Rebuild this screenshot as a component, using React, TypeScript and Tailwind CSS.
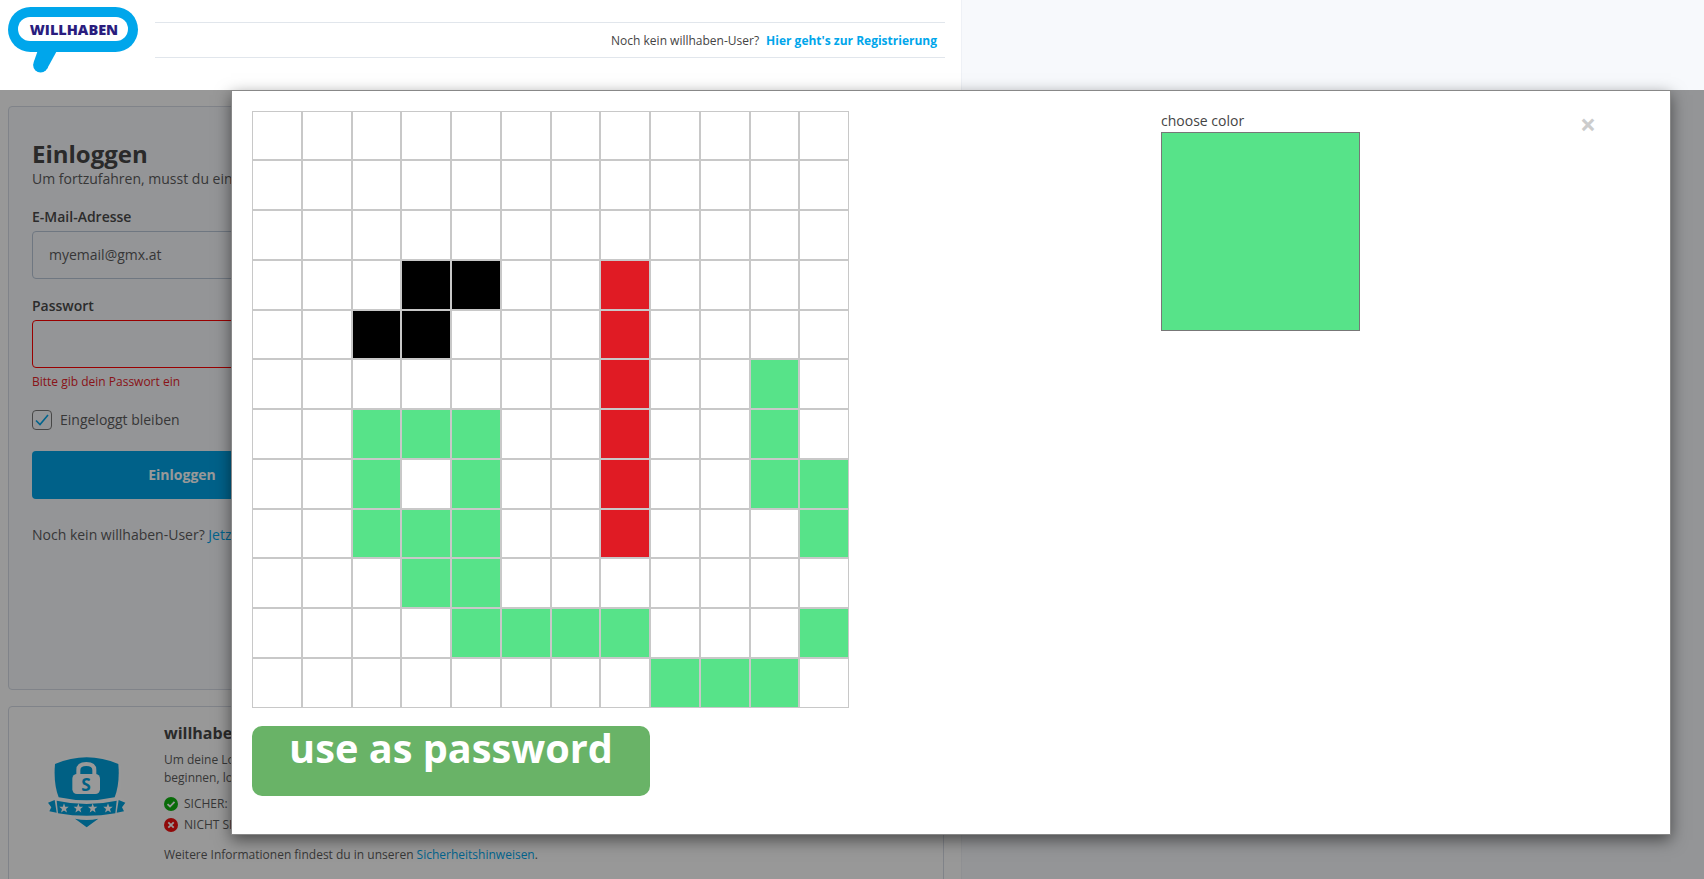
import React from "react";

const G = "bg-[#57e389]";
const R = "bg-[#e01b24]";
const K = "bg-black";

// pixel picture, row -> col -> colour
const painted: Record<string, string> = {
  "3-3": K, "3-4": K, "3-7": R,
  "4-2": K, "4-3": K, "4-7": R,
  "5-7": R, "5-10": G,
  "6-2": G, "6-3": G, "6-4": G, "6-7": R, "6-10": G,
  "7-2": G, "7-4": G, "7-7": R, "7-10": G, "7-11": G,
  "8-2": G, "8-3": G, "8-4": G, "8-7": R, "8-11": G,
  "9-3": G, "9-4": G,
  "10-4": G, "10-5": G, "10-6": G, "10-7": G, "10-11": G,
  "11-8": G, "11-9": G, "11-10": G,
};

const Logo = () => (
  <svg width="132" height="68" viewBox="0 0 132 68" className="shrink-0">
    <path d="M31 40 L25.800 55 L38.800 62.300 L51 40 Z" fill="#00a6eb" />
    <circle cx="32.600" cy="58" r="7.500" fill="#00a6eb" />
    <rect x="0" y="0" width="130" height="45" rx="22.500" fill="#00a6eb" />
    <rect x="10" y="10" width="110" height="24" rx="12" fill="#ffffff" />
    <text x="66" y="28" textAnchor="middle" fontFamily="Open Sans" fontWeight="800" fontSize="14.500" fill="#2a1d7e">
      WILLHABEN
    </text>
  </svg>
);

const starPoints = (cx: number, cy: number, r: number) =>
  Array.from({ length: 10 })
    .map((_, i) => {
      const a = -Math.PI / 2 + (i * Math.PI) / 5;
      const d = i % 2 === 0 ? r : r * 0.42;
      return `${cx + d * Math.cos(a)},${cy + d * Math.sin(a)}`;
    })
    .join(" ");

const Shield = () => (
  <svg width="100" height="85" viewBox="0 0 300 255" className="shrink-0">
    <path
      d="M45 42 Q140 2 235 42 Q240 100 232 145 L256 158 L246 172 L252 184 L226 192 L175 206 L140 232 L105 206 L54 192 L28 184 L34 172 L24 158 L48 145 Q40 100 45 42 Z"
      fill="#ffffff"
      stroke="#ffffff"
      strokeWidth="12"
      strokeLinejoin="round"
    />
    <path d="M45 42 Q140 2 235 42 Q240 100 224 142 Q140 160 56 142 Q40 100 45 42 Z" fill="#00a0dc" />
    <path d="M50 152 Q140 172 230 152 L226 190 Q140 205 54 190 Z" fill="#00a0dc" />
    <path d="M44 150 L24 158 L34 172 L28 184 L50 188 Z" fill="#00a0dc" />
    <path d="M236 150 L256 158 L246 172 L252 184 L230 188 Z" fill="#00a0dc" />
    <path d="M105 206 Q140 214 175 206 L140 232 Z" fill="#00a0dc" />
    <path d="M115 78 V60 Q115 42 139 42 Q163 42 163 60 V78" fill="none" stroke="#ffffff" strokeWidth="12" />
    <rect x="97" y="72" width="83" height="60" rx="14" fill="#ffffff" />
    <text x="138" y="122" textAnchor="middle" fontFamily="Open Sans" fontWeight="700" fontSize="52" fill="#00a0dc">S</text>
    {[72, 115, 158, 204].map((x) => (
      <polygon key={x} points={starPoints(x, 175, 15)} fill="#ffffff" />
    ))}
  </svg>
);

const StatusDot = ({ ok }: { ok: boolean }) => (
  <svg width="14" height="14" viewBox="0 0 14 14" className="shrink-0">
    <circle cx="7" cy="7" r="7" fill={ok ? "#0fb30f" : "#f01010"} />
    {ok ? (
      <path d="M3.500 7.200 L6 9.500 L10.500 4.800" fill="none" stroke="#ffffff" strokeWidth="1.800" />
    ) : (
      <path d="M4.300 4.300 L9.700 9.700 M9.700 4.300 L4.300 9.700" fill="none" stroke="#ffffff" strokeWidth="1.800" />
    )}
  </svg>
);

const PixelGrid = () => (
  <div className="grid grid-cols-12 grid-rows-[49px_50px_50px_50px_49px_50px_50px_50px_49px_50px_50px_50px] w-[597px]">
    {Array.from({ length: 144 }).map((_, i) => {
      const key = `${Math.floor(i / 12)}-${i % 12}`;
      return <div key={key} className={`border border-[#c8c8c8] ${painted[key] ?? "bg-white"}`} />;
    })}
  </div>
);

const App = () => {
  return (
    <div className="relative h-[879px] overflow-hidden flex bg-[#f7f9fc] text-[#5c5c5c] font-['Open_Sans',sans-serif] text-sm">
      <div className="w-[962px] shrink-0 bg-[#fefefe] border-r border-[#eef1f6]">
        <header className="flex h-[90px] pl-2 pt-[7px] bg-white">
          <Logo />
          <div className="flex items-center justify-end w-[790px] h-9 mt-[15px] ml-[15px] pr-2 pt-px border-y border-[#e1e6ec] text-xs text-[#444444]">
            <span>Noch kein willhaben-User?</span>
            <span className="ml-[7px] font-bold text-[#00a6eb]">Hier geht's zur Registrierung</span>
          </div>
        </header>

        <section className="w-[936px] h-[584px] ml-2 mt-4 pl-[23px] pt-[31px] bg-[#f7f9fc] border border-[#d5dae4] rounded">
          <h1 className="text-2xl leading-[32px] font-bold text-[#464646]">Einloggen</h1>
          <p className="leading-[18px]">Um fortzufahren, musst du einloggen</p>
          <label className="block mt-[19px] leading-5 font-semibold text-[#4a4a4a]">E-Mail-Adresse</label>
          <div className="flex items-center w-[300px] h-12 mt-1 pl-4 bg-[#f7f9fc] border border-[#b9c6d8] rounded">myemail@gmx.at</div>
          <label className="block mt-[17px] leading-5 font-semibold text-[#4a4a4a]">Passwort</label>
          <div className="w-[300px] h-12 mt-1 bg-[#f7f9fc] border border-[#ff0000] rounded" />
          <p className="mt-1.5 text-xs leading-4 text-[#e5222a]">Bitte gib dein Passwort ein</p>
          <div className="flex items-center mt-5">
            <span className="flex items-center justify-center w-5 h-5 border border-[#777777] rounded">
              <svg width="14" height="12" viewBox="0 0 14 12">
                <path d="M1 6.500 L5 10.500 L13 1" fill="none" stroke="#00a6eb" strokeWidth="1.600" />
              </svg>
            </span>
            <span className="ml-2">Eingeloggt bleiben</span>
          </div>
          <div className="flex items-center justify-center w-[300px] h-12 mt-[21px] bg-[#00a2e4] text-white font-bold rounded">Einloggen</div>
          <p className="mt-[26px] leading-5">
            Noch kein willhaben-User? <span className="text-[#00a6eb]">Jetzt registrieren</span>
          </p>
        </section>

        <section className="flex w-[936px] h-[300px] ml-2 mt-4 pl-[31px] pt-4 bg-[#fefefe] border border-[#d5dae4] rounded">
          <div className="mt-[27px]">
            <Shield />
          </div>
          <div className="ml-6 text-xs">
            <h2 className="text-base leading-5 font-bold text-[#464646]">willhaben</h2>
            <p className="mt-2 leading-[18px]">Um deine Login-Daten</p>
            <p className="leading-[18px]">beginnen, logge dich ein</p>
            <div className="flex items-center gap-1.5 mt-2 h-[18px]"><StatusDot ok /><span>SICHER:</span></div>
            <div className="flex items-center gap-1.5 mt-[3px] h-[18px]"><StatusDot ok={false} /><span>NICHT SICHER:</span></div>
            <p className="mt-3 leading-[18px]">
              Weitere Informationen findest du in unseren <span className="text-[#00a6eb]">Sicherheitshinweisen</span>.
            </p>
          </div>
        </section>
      </div>

      {/* dimmed layer and the dialog sit over the login page */}
      <div className="absolute left-0 right-0 top-[90px] bottom-0 bg-black/40">
        <div className="absolute left-[231px] top-0 flex w-[1440px] h-[745px] pl-5 pt-5 bg-white border border-[#888888] shadow-[0_5px_15px_rgba(0,0,0,0.5)]">
          <div>
            <PixelGrid />
            <button className="block w-[398px] h-[70px] mt-[18px] rounded-[10px] bg-[#69b367] text-white text-[39.700px] leading-[44px] font-bold pb-[30px]">
              use as password
            </button>
          </div>
          <div className="ml-[312px] -mt-px text-[#444444]">
            <div className="text-sm leading-[22px]">choose color</div>
            <div className="w-[199px] h-[199px] bg-[#57e389] border border-[#777777]" />
          </div>
          <span className="ml-[220px] -mt-0.5 text-[28px] leading-[30px] font-bold text-[#cccccc]">×</span>
        </div>
      </div>
    </div>
  );
};

export default App;
